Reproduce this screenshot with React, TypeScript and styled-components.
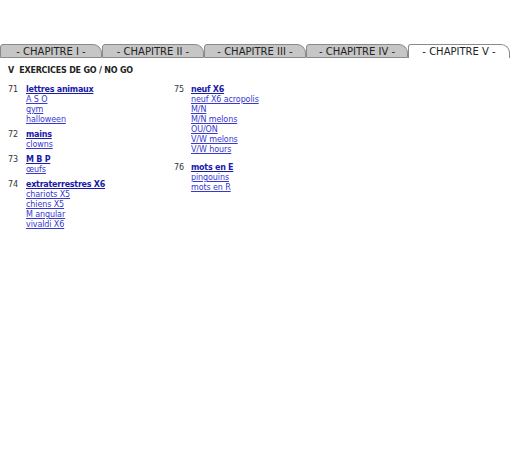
import React from "react";
import styled, { createGlobalStyle } from "styled-components";

const Global = createGlobalStyle`
  html, body { margin: 0; padding: 0; background: #fff; }
  body { font-family: "DejaVu Sans", Verdana, sans-serif; }
`;

const Page = styled.div`
  width: 510px;
  height: 470px;
  padding-top: 44px;
  box-sizing: border-box;
`;

const TabBar = styled.div`
  display: grid;
  grid-template-columns: repeat(5, 1fr);
  height: 14px;
`;

const Tab = styled.div<{ $active?: boolean }>`
  box-sizing: border-box;
  height: 14px;
  border: 1px solid #8a8a8a;
  border-bottom: ${(p) => (p.$active ? "none" : "1px solid #8a8a8a")};
  border-radius: 3px 9px 0 0;
  background: ${(p) => (p.$active ? "#fff" : "#c6c6c6")};
  font-size: 10px;
  line-height: 13px;
  color: #222;
  text-align: center;
  white-space: nowrap;
  overflow: hidden;
`;

const Heading = styled.div`
  margin: 8px 0 0 8px;
  font-size: 8px;
  font-weight: bold;
  color: #222;
  line-height: 10px;
  letter-spacing: -0.2px;
`;

const Columns = styled.div`
  display: grid;
  grid-template-columns: 166px 200px;
  margin: 9px 0 0 8px;
`;

const Col = styled.div`
  display: flex;
  flex-direction: column;
  gap: 5px;
`;

const Group = styled.div<{ $gap?: number }>`
  display: grid;
  grid-template-columns: 18px 1fr;
  margin-top: ${(p) => p.$gap ?? 0}px;
`;

const RightGroup = styled(Group)`
  grid-template-columns: 17px 1fr;
`;

const Num = styled.span`
  font-size: 8px;
  line-height: 10px;
  color: #333;
`;

const Links = styled.div`
  display: flex;
  flex-direction: column;
`;

const Title = styled.a`
  font-size: 8px;
  line-height: 10px;
  font-weight: bold;
  letter-spacing: -0.25px;
  color: #1a1aa8;
  text-decoration: underline;
`;

const Sub = styled.a`
  font-size: 8px;
  line-height: 10px;
  letter-spacing: -0.1px;
  color: #3838d0;
  text-decoration: underline;
`;

type G = { n: number; title: string; subs: string[]; gap?: number };

const left: G[] = [
  { n: 71, title: "lettres animaux", subs: ["A S O", "gym", "halloween"] },
  { n: 72, title: "mains", subs: ["clowns"] },
  { n: 73, title: "M B P", subs: ["œufs"] },
  { n: 74, title: "extraterrestres X6", subs: ["chariots X5", "chiens X5", "M angular", "vivaldi X6"] },
];

const right: G[] = [
  { n: 75, title: "neuf X6", subs: ["neuf X6 acropolis", "M/N", "M/N melons", "OU/ON", "V/W melons", "V/W hours"] },
  { n: 76, title: "mots en E", subs: ["pingouins", "mots en R"], gap: 3 },
];

const body = (g: G) => (
  <>
    <Num>{g.n}</Num>
    <Links>
      <Title href="#">{g.title}</Title>
      {g.subs.map((s) => (
        <Sub key={s} href="#">{s}</Sub>
      ))}
    </Links>
  </>
);

export default function App() {
  const tabs = ["- CHAPITRE I -", "- CHAPITRE II -", "- CHAPITRE III -", "- CHAPITRE IV -", "- CHAPITRE V -"];
  return (
    <Page>
      <Global />
      <TabBar>
        {tabs.map((t, i) => (
          <Tab key={t} $active={i === 4}>{t}</Tab>
        ))}
      </TabBar>
      <Heading>V&nbsp; EXERCICES DE GO / NO GO</Heading>
      <Columns>
        <Col>
          {left.map((g) => (
            <Group key={g.n} $gap={g.gap}>{body(g)}</Group>
          ))}
        </Col>
        <Col>
          {right.map((g) => (
            <RightGroup key={g.n} $gap={g.gap}>{body(g)}</RightGroup>
          ))}
        </Col>
      </Columns>
    </Page>
  );
}
